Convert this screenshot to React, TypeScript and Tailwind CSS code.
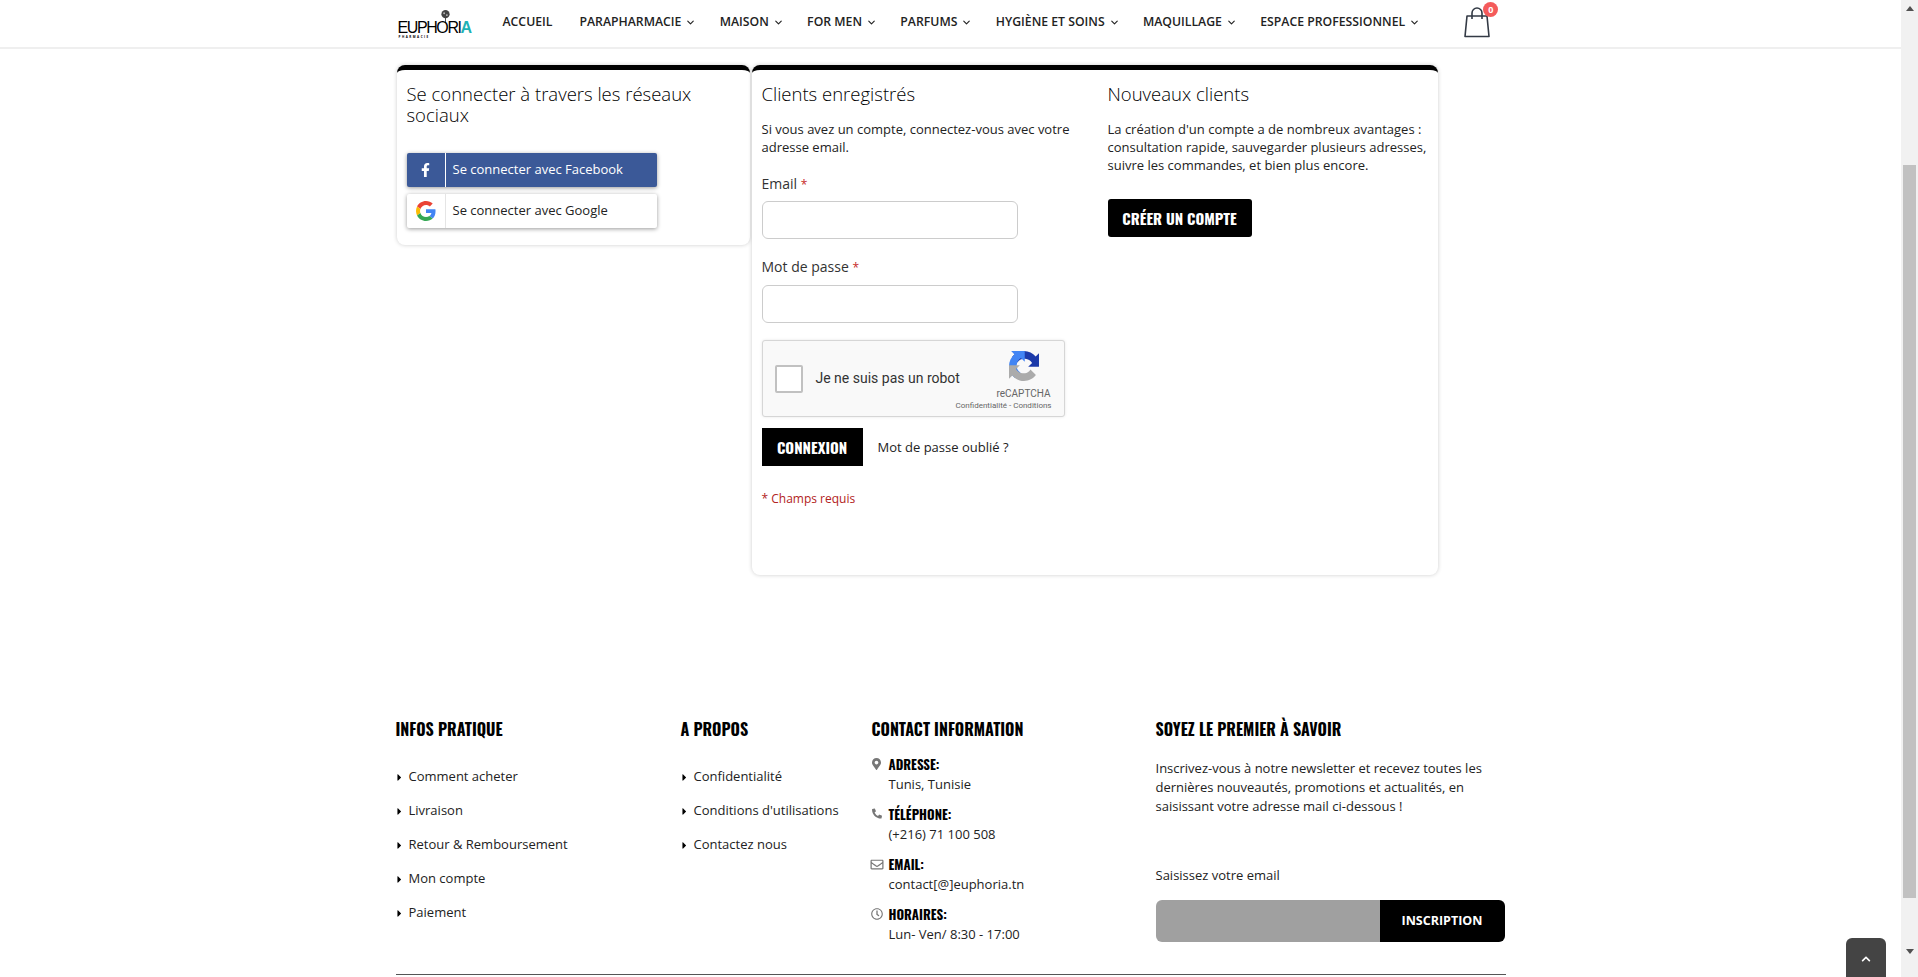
import { FaFacebookF, FaCaretRight, FaMapMarkerAlt, FaPhoneAlt, FaRegEnvelope, FaRegClock, FaChevronUp } from "react-icons/fa";
import { ChevronDown } from "lucide-react";

const nav: [string, boolean][] = [
  ["Accueil", false], ["Parapharmacie", true], ["Maison", true], ["For men", true], ["Parfums", true],
  ["Hygiène et soins", true], ["Maquillage", true], ["Espace professionnel", true],
];
const head = "font-['Oswald','Liberation_Sans_Narrow','DejaVu_Sans_Condensed',sans-serif] font-bold uppercase text-black";

function GoogleLogo() {
  return (
    <svg viewBox="0 0 48 48" className="w-[20px] h-[20px]">
      <path fill="#EA4335" d="M24 9.5c3.5 0 6.7 1.2 9.2 3.600l6.900-6.900C35.900 2.400 30.400 0 24 0 14.600 0 6.500 5.400 2.600 13.200l8 6.200C12.500 13.700 17.800 9.500 24 9.500z" />
      <path fill="#4285F4" d="M46.900 24.500c0-1.600-.1-3.100-.4-4.500H24v9h12.900c-.6 3-2.200 5.500-4.700 7.200l7.700 6c4.500-4.200 7-10.300 7-17.700z" />
      <path fill="#FBBC05" d="M10.500 28.600c-.5-1.400-.8-3-.8-4.600s.3-3.200.8-4.600l-8-6.200C.9 16.500 0 20.100 0 24s.9 7.500 2.600 10.800l7.900-6.200z" />
      <path fill="#34A853" d="M24 48c6.500 0 11.900-2.100 15.900-5.800l-7.700-6c-2.200 1.500-4.900 2.300-8.200 2.300-6.200 0-11.500-4.200-13.400-9.900l-8 6.200C6.500 42.600 14.600 48 24 48z" />
    </svg>
  );
}

function Recaptcha() {
  return (
    <svg viewBox="0 0 64 64" className="w-[30px] h-[30px]">
      <path fill="#1C3AA9" d="M64 31.955l-.033-1.37V4.687l-7.16 7.16C50.948 4.674 42.033.093 32.05.093c-10.4 0-19.622 4.96-25.458 12.64l11.736 11.86a15.55 15.55 0 0 1 4.754-5.334c2.05-1.6 4.952-2.906 9.968-2.906.606 0 1.074.07 1.418.202 6.212.49 11.596 3.92 14.767 8.897l-8.307 8.308c10.522-.04 22.41-.066 22.97.002" />
      <path fill="#4285F4" d="M31.862.094l-1.37.033H4.594l7.16 7.16C4.58 13.147 0 22.06 0 32.046c0 10.4 4.96 19.622 12.64 25.458l11.86-11.736a15.55 15.55 0 0 1-5.334-4.754c-1.6-2.05-2.906-4.952-2.906-9.968 0-.606.07-1.074.202-1.418.49-6.212 3.92-11.596 8.897-14.767l8.308 8.308c-.04-10.522-.066-22.41.002-22.97" />
      <path fill="#ABABAB" d="M.001 32.045l.033 1.37v25.898l7.16-7.160c5.860 7.173 14.774 11.754 24.760 11.754 10.400 0 19.622-4.960 25.458-12.640l-11.736-11.860a15.550 15.550 0 0 1-4.754 5.334c-2.050 1.600-4.952 2.906-9.968 2.906-.606 0-1.074-.070-1.418-.202-6.212-.490-11.596-3.920-14.767-8.897l8.307-8.308c-10.522.040-22.410.066-22.970-.002" />
    </svg>
  );
}

function Bag() {
  return (
    <svg viewBox="0 0 28 32" className="w-[28px] h-[32px]" fill="none" stroke="#333a45" strokeWidth="1.6">
      <path d="M4 10h20l2 20.500H2z" strokeLinejoin="round" />
      <path d="M9 13V7a5 5 0 0 1 10 0v6" />
    </svg>
  );
}

function Logo() {
  return (
    <div className="relative ml-[2px] w-[64px] h-[30px] mt-[2px] shrink-0">
      <svg viewBox="0 0 12 14" className="absolute left-[42px] top-[-1px] w-[11px] h-[14px]">
        <circle cx="6" cy="5" r="4.500" fill="#444" />
        <circle cx="4.500" cy="4" r="1" fill="#bbb" />
        <circle cx="7.500" cy="6" r="1" fill="#bbb" />
        <path d="M6 9v5" stroke="#444" strokeWidth="1" />
      </svg>
      <div className="absolute left-0 top-[10px] leading-[15px] text-[16px] tracking-[-1.400px] text-black font-['Liberation_Sans',sans-serif] whitespace-nowrap">
        EUPHORI<span className="text-[#1fb2b5] font-bold">A</span>
      </div>
      <div className="absolute left-[1px] top-[25px] text-[3px] leading-[4px] tracking-[1.500px] text-black font-bold whitespace-nowrap">PHARMACIE</div>
    </div>
  );
}

function Field({ label, mb, gap }: { label: string; mb: string; gap: string }) {
  return (
    <div className={mb}>
      <div className={`text-[14px] leading-[20px] text-[#333] ${gap}`}>{label} <span className="text-[#c62828] text-[12px]">*</span></div>
      <div className="w-[256px] h-[38px] border border-[#ccc] rounded-[6px] bg-white" />
    </div>
  );
}

function LinkItem({ t }: { t: string }) {
  return (
    <div className="flex items-center h-[34px] text-[13px] text-[#222]">
      <FaCaretRight className="w-[7px] h-[11px] mr-[6px] ml-0 text-black shrink-0" />
      <span>{t}</span>
    </div>
  );
}

function Contact({ icon, label, value }: { icon: React.ReactNode; label: string; value: string }) {
  return (
    <div className="flex h-[50px]">
      <div className="w-[10px] mr-[7px] pt-[4px] text-[#777] flex justify-center shrink-0">{icon}</div>
      <div>
        <div className={`${head} text-[13px] leading-[21px]`}>{label}</div>
        <div className="text-[13px] leading-[19px] text-[#222]">{value}</div>
      </div>
    </div>
  );
}

export default function App() {
  return (
    <div className="h-[977px] overflow-hidden flex bg-white font-['Open_Sans',sans-serif]">
      <div className="relative flex-1 min-w-0 flex flex-col">
        <header className="h-[49px] shrink-0 border-b-2 border-[#efefef]">
          <div className="w-[1110px] mx-auto h-full flex items-center">
            <Logo />
            <nav className="flex items-center ml-[41px] mt-[-2px] text-[12.250px] font-semibold uppercase text-[#222] whitespace-nowrap">
              {nav.map(([t, c]) => (
                <div key={t} className={c ? "flex items-center mr-[23.300px]" : "flex items-center mr-[27px]"}>
                  <span>{t}</span>
                  {c && <ChevronDown className="w-[11px] h-[11px] ml-[4px]" strokeWidth={2.500} />}
                </div>
              ))}
            </nav>
            <div className="relative ml-[20px] mt-[-3px]">
              <Bag />
              <div className="absolute -top-[4px] -right-[7px] w-[15px] h-[15px] rounded-full bg-[#f45b5b] text-white text-[9px] font-bold leading-[15px] text-center">0</div>
            </div>
          </div>
        </header>

        <main className="w-[1110px] mx-auto pl-[1px] pt-[16px] flex items-start gap-[2px]">
          <section className="w-[353px] h-[180px] border-t-[5px] border-black rounded-[8px] bg-white shadow-[0_0_4px_rgba(0,0,0,0.2)] pt-[13px] px-[10px]">
            <h2 className="text-[18.500px] leading-[21px] font-light text-black h-[44px]">Se connecter à travers les réseaux sociaux</h2>
            <div className="mt-[26px] w-[250px] h-[34px] bg-[#3b5998] rounded-[2px] flex items-center text-white shadow-[0_1px_4px_rgba(0,0,0,0.4)]">
              <div className="w-[39px] h-full border-r border-white flex items-center justify-center"><FaFacebookF className="w-[13px] h-[14px]" /></div>
              <span className="ml-[7px] text-[13px]">Se connecter avec Facebook</span>
            </div>
            <div className="mt-[7px] w-[250px] h-[34px] bg-white rounded-[2px] flex items-center text-[#222] shadow-[0_1px_4px_rgba(0,0,0,0.4)]">
              <div className="w-[39px] h-full border-r border-[#e5e5e5] flex items-center justify-center"><GoogleLogo /></div>
              <span className="ml-[7px] text-[13px]">Se connecter avec Google</span>
            </div>
          </section>

          <section className="w-[686px] h-[510px] border-t-[5px] border-black rounded-[8px] bg-white shadow-[0_0_4px_rgba(0,0,0,0.2)] pt-[13px] px-[10px] flex">
            <div className="w-[346px] shrink-0">
              <h2 className="text-[18.500px] leading-[22px] font-light text-black">Clients enregistrés</h2>
              <p className="mt-[15px] w-[320px] text-[13px] leading-[18px] text-[#222]">Si vous avez un compte, connectez-vous avec votre adresse email.</p>
              <div className="mt-[18px]"><Field label="Email" gap="mb-[6px]" mb="mb-[18px]" /></div>
              <Field label="Mot de passe" gap="mb-[7px]" mb="mb-[17px]" />
              <div className="relative w-[303px] h-[77px] bg-[#f9f9f9] border border-[#d6d6d6] rounded-[3px] shadow-[0_0_3px_rgba(0,0,0,0.1)] flex items-center pl-[12px] font-['Roboto',sans-serif]">
                <div className="w-[28px] h-[28px] bg-white border-2 border-[#c1c1c1] rounded-[2px]" />
                <span className="ml-[13px] text-[14px] text-[#333]">Je ne suis pas un robot</span>
                <div className="absolute right-[25px] top-[10px]"><Recaptcha /></div>
                <div className="absolute right-[13px] top-[47px] text-[10px] leading-[12px] text-[#666]">reCAPTCHA</div>
                <div className="absolute right-[12px] top-[60px] text-[8px] leading-[10px] text-[#666]">Confidentialité - Conditions</div>
              </div>
              <div className="mt-[11px] flex items-center">
                <div className={`${head} !text-white bg-black w-[101px] h-[38px] flex items-center justify-center text-[15px]`}>Connexion</div>
                <span className="ml-[15px] mt-[1px] text-[13px] text-[#222]">Mot de passe oublié ?</span>
              </div>
              <p className="mt-[24px] text-[12px] text-[#b22222]">* Champs requis</p>
            </div>
            <div className="flex-1">
              <h2 className="text-[18.500px] leading-[22px] font-light text-black">Nouveaux clients</h2>
              <p className="mt-[15px] text-[13px] leading-[18px] text-[#222]">La création d'un compte a de nombreux avantages : consultation rapide, sauvegarder plusieurs adresses, suivre les commandes, et bien plus encore.</p>
              <div className={`${head} !text-white mt-[25px] bg-black rounded-[3px] w-[144px] h-[38px] flex items-center justify-center text-[15px]`}>Créer un compte</div>
            </div>
          </section>
        </main>

        <footer className="w-[1110px] mx-auto mt-[142px] border-b border-[#555] h-[258px] flex">
          <div className="w-[285px]">
            <h3 className={`${head} text-[16px] leading-[24px] mb-[19px]`}>Infos pratique</h3>
            {["Comment acheter", "Livraison", "Retour & Remboursement", "Mon compte", "Paiement"].map((t) => <LinkItem key={t} t={t} />)}
          </div>
          <div className="w-[191px]">
            <h3 className={`${head} text-[16px] leading-[24px] mb-[19px]`}>A propos</h3>
            {["Confidentialité", "Conditions d'utilisations", "Contactez nous"].map((t) => <LinkItem key={t} t={t} />)}
          </div>
          <div className="w-[284px]">
            <h3 className={`${head} text-[16px] leading-[24px] mb-[13px]`}>Contact information</h3>
            <Contact icon={<FaMapMarkerAlt className="w-[9px] h-[12px] shrink-0" />} label="Adresse:" value="Tunis, Tunisie" />
            <Contact icon={<FaPhoneAlt className="w-[10px] h-[11px] shrink-0" />} label="Téléphone:" value="(+216) 71 100 508" />
            <Contact icon={<FaRegEnvelope className="w-[16px] h-[13px] shrink-0" />} label="Email:" value="contact[@]euphoria.tn" />
            <Contact icon={<FaRegClock className="w-[12px] h-[12px] shrink-0" />} label="Horaires:" value="Lun- Ven/ 8:30 - 17:00" />
          </div>
          <div className="w-[349px]">
            <h3 className={`${head} text-[16px] leading-[24px] mb-[18px]`}>Soyez le premier à savoir</h3>
            <p className="text-[13px] leading-[19px] text-[#222]">Inscrivez-vous à notre newsletter et recevez toutes les dernières nouveautés, promotions et actualités, en saisissant votre adresse mail ci-dessous !</p>
            <div className="mt-[50px] text-[13px] leading-[19px] text-[#222]">Saisissez votre email</div>
            <div className="mt-[15px] flex h-[42px] rounded-[6px] overflow-hidden">
              <div className="w-[224px] bg-[#a0a0a0]" />
              <div className="flex-1 bg-black text-white text-[12.500px] font-bold uppercase flex items-center justify-center">Inscription</div>
            </div>
          </div>
        </footer>

        <div className="absolute left-[1846px] top-[938px] w-[40px] h-[60px] bg-[#444] rounded-t-[6px] flex justify-center pt-[16px] text-white">
          <FaChevronUp className="w-[10px] h-[10px]" />
        </div>
      </div>

      <div className="w-[17px] shrink-0 bg-[#f1f1f1] flex flex-col items-center">
        <div className="h-[17px] flex items-center justify-center"><div className="border-x-[4px] border-x-transparent border-b-[5px] border-b-[#505050]" /></div>
        <div className="mt-[148px] w-[13px] h-[733px] bg-[#c1c1c1]" />
        <div className="mt-[45px] h-[17px] flex items-center justify-center"><div className="border-x-[4px] border-x-transparent border-t-[5px] border-t-[#505050]" /></div>
      </div>
    </div>
  );
}
